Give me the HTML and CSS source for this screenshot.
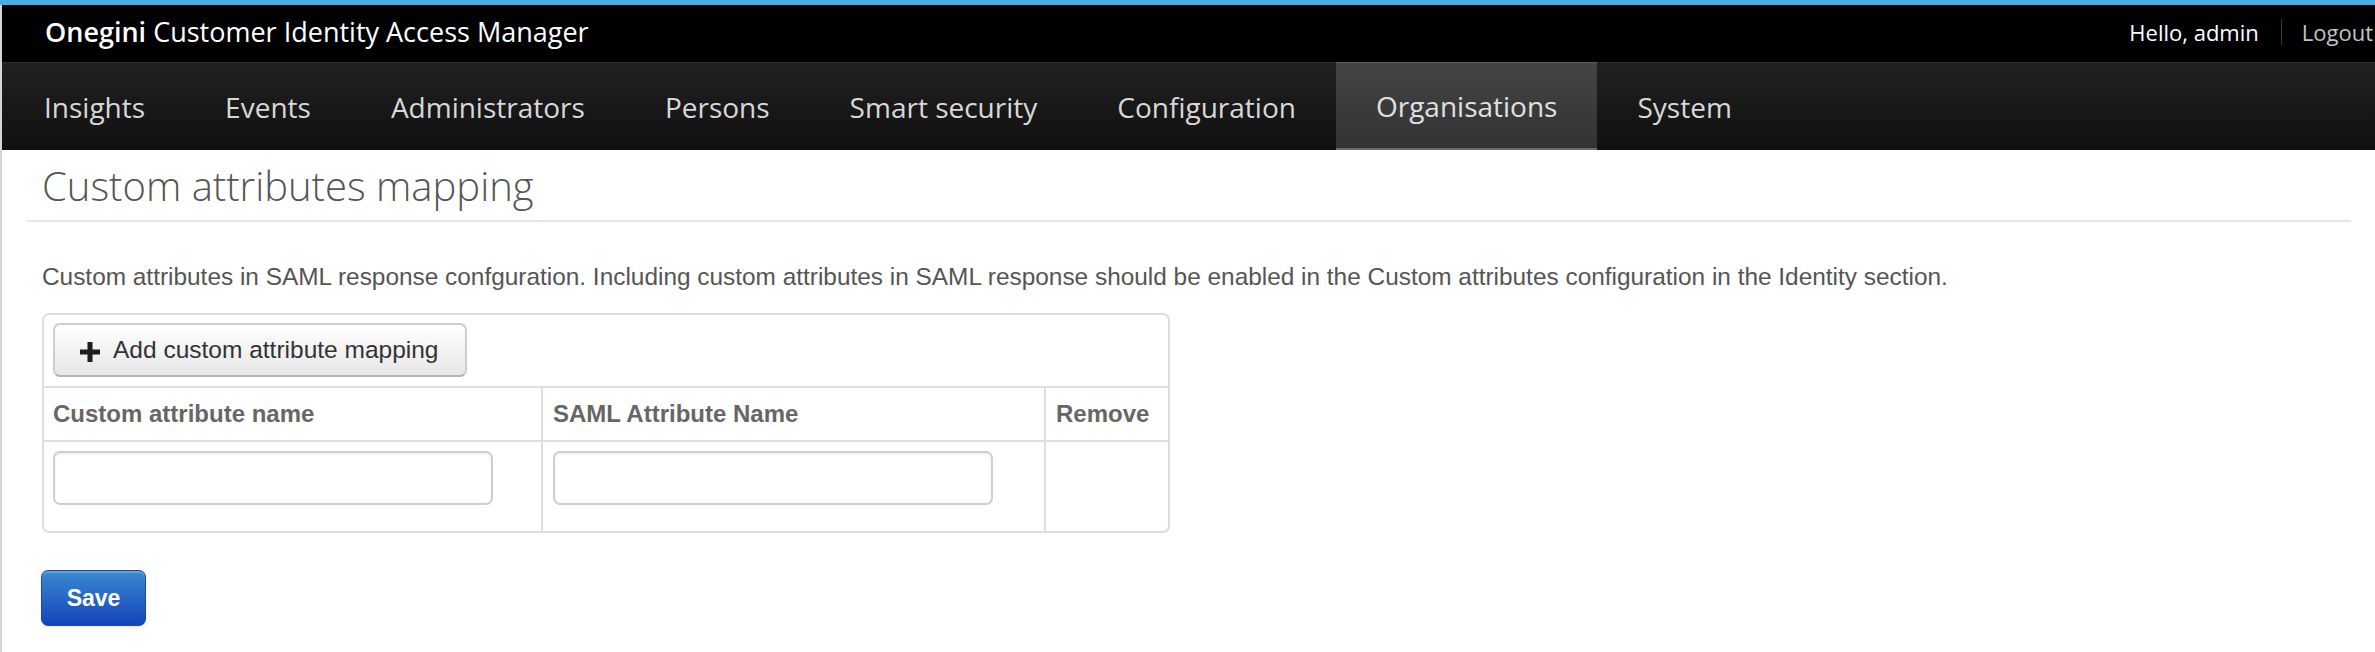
FILE: index.html
```html
<!DOCTYPE html>
<html lang="en">
<head>
<meta charset="utf-8">
<title>Custom attributes mapping</title>
<link rel="stylesheet" href="styles.css">
</head>
<body>
<div class="accent"></div>
<div class="frame">
  <header class="topbar">
    <div class="brand"><b>Onegini</b> Customer Identity Access Manager</div>
    <div class="user">
      <span class="hello">Hello, admin</span>
      <span class="sep"></span>
      <a class="logout">Logout</a>
    </div>
  </header>
  <nav class="mainnav">
    <a class="nav-item">Insights</a>
    <a class="nav-item">Events</a>
    <a class="nav-item">Administrators</a>
    <a class="nav-item">Persons</a>
    <a class="nav-item">Smart security</a>
    <a class="nav-item">Configuration</a>
    <a class="nav-item active">Organisations</a>
    <a class="nav-item">System</a>
  </nav>
  <main class="content">
    <h1 class="page-title">Custom attributes mapping</h1>
    <hr class="rule">
    <p class="desc">Custom attributes in SAML response confguration. Including custom attributes in SAML response should be enabled in the Custom attributes configuration in the Identity section.</p>
    <div class="mapping">
      <div class="toolbar">
        <button class="btn" type="button">
          <svg class="plus" viewBox="0 0 20 20" width="20" height="20"><rect x="7.5" y="0" width="5" height="20"/><rect x="0" y="7.5" width="20" height="5"/></svg>
          <span>Add custom attribute mapping</span>
        </button>
      </div>
      <div class="grid">
        <div class="cell head first">Custom attribute name</div>
        <div class="cell head">SAML Attribute Name</div>
        <div class="cell head">Remove</div>
        <div class="cell body first"><input class="field" type="text"></div>
        <div class="cell body"><input class="field" type="text"></div>
        <div class="cell body"></div>
      </div>
    </div>
    <button class="btn-primary" type="button">Save</button>
  </main>
</div>
</body>
</html>
```
FILE: styles.css
```css
html, body {
  margin: 0;
  padding: 0;
  background: #fff;
}
body {
  font-family: "Liberation Sans", Arial, sans-serif;
  width: 2375px;
  height: 652px;
  overflow: hidden;
}
.accent {
  height: 5px;
  background: #4aade8;
}
.frame {
  border-left: 2px solid #d6d6d6;
  height: 647px;
}
.topbar {
  height: 57px;
  background: #000;
  display: flex;
  align-items: center;
  justify-content: space-between;
  padding: 0 2px 0 43px;
  font-family: "Open Sans", sans-serif;
}
.brand {
  color: #fff;
  font-size: 27px;
  font-weight: 400;
  line-height: 1;
  margin-top: -4px;
}
.brand b {
  font-weight: 600;
}
.user {
  display: flex;
  align-items: center;
  font-size: 22px;
  margin-top: -4px;
}
.hello {
  color: #fff;
}
.sep {
  width: 1px;
  height: 26px;
  background: #3a3a3a;
  margin: 0 20px 0 22px;
}
.logout {
  color: #c4c4c4;
}
.mainnav {
  height: 88px;
  box-sizing: border-box;
  display: flex;
  padding-left: 2px;
  background: linear-gradient(#212121, #101010);
  border-top: 1px solid #2c2c2c;
  font-family: "Open Sans", sans-serif;
}
.nav-item {
  display: flex;
  align-items: center;
  padding: 0 40px;
  font-size: 28px;
  color: #d8d8d8;
}
.nav-item.active {
  background: linear-gradient(#444, #323232);
  box-shadow: inset 0 1px 0 #5c5c5c, inset 0 -2px 0 #6a6a6a;
  color: #e0e0e0;
  margin-top: -1px;
}
.content {
  padding: 0 24px 0 40px;
}
.page-title {
  margin: 14px 0 0;
  font-family: "Open Sans", sans-serif;
  font-weight: 300;
  font-size: 40px;
  line-height: 44px;
  color: #555;
}
.rule {
  margin: 12px 0 0 -15px;
  border: 0;
  height: 2px;
  background: #e5e5e5;
}
.desc {
  margin: 40px 0 0;
  font-size: 24.4px;
  line-height: 30px;
  color: #555;
}
.mapping {
  margin-top: 21px;
  width: 1128px;
  box-sizing: border-box;
  border: 2px solid #dedede;
  border-radius: 7px;
  overflow: hidden;
}
.toolbar {
  padding: 8px 9px 9px;
  height: 71px;
  box-sizing: border-box;
}
.btn {
  height: 54px;
  box-sizing: border-box;
  display: inline-flex;
  align-items: center;
  gap: 13px;
  padding: 0 26px 0 25px;
  border: 2px solid #cdcdcd;
  border-bottom-color: #b5b5b5;
  border-radius: 7px;
  background: linear-gradient(#ffffff, #e6e6e6);
  font-family: "Liberation Sans", Arial, sans-serif;
  font-size: 24.5px;
  color: #333;
}
.plus {
  fill: #1e1e1e;
  margin-top: 4px;
}
.grid {
  display: grid;
  grid-template-columns: 497px 503px 1fr;
}
.cell {
  border-top: 2px solid #dedede;
  border-left: 2px solid #dedede;
  box-sizing: border-box;
}
.cell.first {
  border-left: 0;
}
.head {
  height: 54px;
  line-height: 52px;
  padding: 0 10px 0 9px;
  font-weight: 700;
  font-size: 24px;
  color: #666;
}
.head:not(.first) {
  padding-left: 10px;
}
.body {
  height: 91px;
  padding: 9px 10px 0 9px;
}
.body:not(.first) {
  padding-left: 10px;
}
.field {
  display: block;
  width: 440px;
  height: 54px;
  box-sizing: border-box;
  margin: 0;
  border: 2px solid #cfcfcf;
  border-radius: 7px;
  background: #fff;
  box-shadow: inset 0 2px 2px rgba(0, 0, 0, 0.06);
}
.btn-primary {
  display: block;
  margin-top: 37px;
  margin-left: -1px;
  width: 105px;
  height: 56px;
  box-sizing: border-box;
  border: 1px solid #1d49a8;
  border-radius: 7px;
  background: linear-gradient(#3a8bcf, #1443bb);
  box-shadow: inset 0 2px 0 rgba(255, 255, 255, 0.2), 0 2px 3px rgba(0, 0, 0, 0.08);
  font-family: "Liberation Sans", Arial, sans-serif;
  font-weight: 700;
  font-size: 23px;
  color: #fff;
  padding: 0;
}
```
